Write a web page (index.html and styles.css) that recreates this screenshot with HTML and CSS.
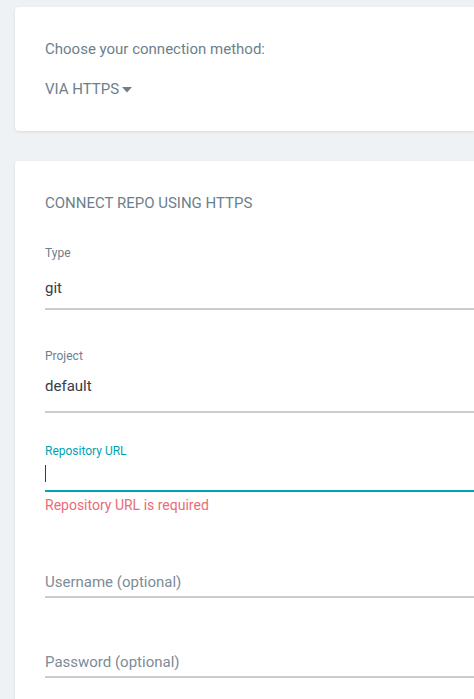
FILE: index.html
```html
<!DOCTYPE html>
<html>
<head>
<meta charset="utf-8">
<link rel="stylesheet" href="styles.css">
</head>
<body>
<div class="page">
  <div class="card card-method">
    <div class="method-title">Choose your connection method:</div>
    <div class="method-select">VIA HTTPS<svg class="caret" width="10" height="6" viewBox="0 0 10 6"><polygon points="0,0 10,0 5,5.5" fill="#6d7f8b"/></svg></div>
  </div>
  <div class="card card-form">
    <div class="form-title">CONNECT REPO USING HTTPS</div>
    <div class="field field-type">
      <div class="label">Type</div>
      <div class="value">git</div>
    </div>
    <div class="field field-project">
      <div class="label">Project</div>
      <div class="value">default</div>
    </div>
    <div class="field field-url">
      <div class="label label-focus">Repository URL</div>
      <div class="value value-focus"><span class="cursor"></span></div>
      <div class="error">Repository URL is required</div>
    </div>
    <div class="field field-user">
      <div class="value placeholder">Username (optional)</div>
    </div>
    <div class="field field-pass">
      <div class="value placeholder">Password (optional)</div>
    </div>
  </div>
</div>
</body>
</html>
```

FILE: styles.css
```css
html, body {
  margin: 0;
  padding: 0;
  overflow: hidden;
}
body {
  background: #eef2f5;
  font-family: Roboto, "Liberation Sans", sans-serif;
  color: #6d7f8b;
  width: 474px;
  height: 699px;
}
.page {
  padding: 7px 0 0 15px;
}
.card {
  background: #fff;
  border-radius: 4px 0 0 4px;
  box-shadow: 0 1px 3px rgba(0, 0, 0, 0.1);
  padding-left: 30px;
}
.card-method {
  padding-top: 32px;
  padding-bottom: 32px;
}
.method-title {
  font-size: 15px;
  line-height: 20px;
}
.method-select {
  font-size: 15px;
  line-height: 20px;
  margin-top: 20px;
  display: flex;
  align-items: center;
}
.caret {
  margin-left: 3px;
  margin-top: 1px;
}
.card-form {
  margin-top: 30px;
  padding-top: 32px;
  padding-bottom: 40px;
}
.form-title {
  font-size: 15px;
  line-height: 20px;
}
.label {
  font-size: 12px;
  line-height: 16px;
  color: #6d7f8b;
}
.label-focus {
  color: #00a2b3;
}
.value {
  font-size: 15px;
  line-height: 20px;
  color: #363c4a;
  border-bottom: 2px solid #cccccc;
}
.placeholder {
  color: #7b8c98;
}
.value-focus {
  border-bottom-color: #00a2b3;
  height: 20px;
  display: flex;
  align-items: center;
}
.cursor {
  display: block;
  width: 1px;
  height: 17px;
  background: #363c4a;
}
.error {
  font-size: 14px;
  line-height: 20px;
  color: #e96d76;
  margin-top: 3px;
}
.field-type { margin-top: 32px; }
.field-type .value { margin-top: 17px; padding-bottom: 10px; }
.field-project { margin-top: 38px; }
.field-project .value { margin-top: 12px; padding-bottom: 15px; }
.field-url { margin-top: 30px; }
.field-url .value { margin-top: 4px; padding-bottom: 7px; }
.field-user { margin-top: 57px; }
.field-user .value { padding-bottom: 4px; }
.field-pass { margin-top: 54px; }
.field-pass .value { padding-bottom: 4px; }
```
